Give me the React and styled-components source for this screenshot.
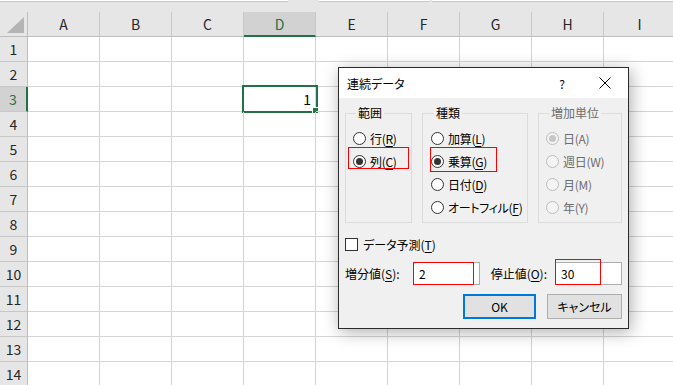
import React from 'react'
import styled, { createGlobalStyle, css } from 'styled-components'

const GlobalStyle = createGlobalStyle`
  body {
    margin: 0;
    background: #ffffff;
    font-family: "Noto Sans CJK JP", "Noto Sans", sans-serif;
  }
`

const COLUMNS = ['A', 'B', 'C', 'D', 'E', 'F', 'G', 'H', 'I']
const ROWS = Array.from({ length: 14 }, (_, i) => i + 1)

const Page = styled.div`
  position: relative;
  width: 673px;
  height: 385px;
  overflow: hidden;
  background: #ffffff;
`

const TopStrip = styled.div`
  display: flex;
  height: 12px;
  background: #e6e6e6;
`

const FormulaBox = styled.div`
  width: ${props => props.$width}px;
  margin-left: ${props => props.$offset || 0}px;
  height: 1px;
  background: #ffffff;
  border-bottom: 1px solid #c6c6c6;
`

const Sheet = styled.div`
  display: grid;
  grid-template-columns: 28px repeat(9, 72px);
  grid-template-rows: 25px;
  grid-auto-rows: 25px;
  font-family: "Noto Sans CJK JP", sans-serif;
`

const Corner = styled.div`
  box-sizing: border-box;
  background: #e6e6e6;
  border-right: 1px solid #bdbdbd;
  border-bottom: 1px solid #bdbdbd;
  display: flex;
  align-items: flex-end;
  justify-content: flex-end;
  padding: 0 3px 3px 0;

  &::before {
    content: '';
    width: 0;
    height: 0;
    border-left: 17px solid transparent;
    border-bottom: 16px solid #b4b4b4;
  }
`

const ColHead = styled.div`
  box-sizing: border-box;
  display: flex;
  align-items: center;
  justify-content: center;
  font-size: 14px;
  color: ${props => (props.$active ? '#217346' : '#262626')};
  background: ${props => (props.$active ? '#d2d2d2' : '#e6e6e6')};
  border-right: 1px solid #c8c8c8;
  border-bottom: ${props => (props.$active ? '2px solid #217346' : '1px solid #bdbdbd')};
`

const RowHead = styled.div`
  box-sizing: border-box;
  display: flex;
  align-items: center;
  justify-content: center;
  font-size: 14px;
  color: ${props => (props.$active ? '#217346' : '#262626')};
  background: ${props => (props.$active ? '#d2d2d2' : '#e6e6e6')};
  border-bottom: 1px solid #c8c8c8;
  border-right: ${props => (props.$active ? '2px solid #217346' : '1px solid #bdbdbd')};
`

const Cell = styled.div`
  position: relative;
  box-sizing: border-box;
  display: flex;
  align-items: center;
  justify-content: flex-end;
  padding-right: 4px;
  font-size: 14px;
  color: #000000;
  border-right: 1px solid #d4d4d4;
  border-bottom: 1px solid #d4d4d4;

  ${props =>
    props.$selected &&
    css`
      &::before {
        content: '';
        position: absolute;
        top: -2px;
        left: -2px;
        right: -3px;
        bottom: -2px;
        border: 2px solid #217346;
      }
      &::after {
        content: '';
        position: absolute;
        right: -4px;
        bottom: -3px;
        width: 5px;
        height: 5px;
        background: #217346;
        border: 1px solid #ffffff;
      }
    `}
`

const Dialog = styled.div`
  position: absolute;
  left: 338px;
  top: 67px;
  width: 291px;
  height: 262px;
  box-sizing: border-box;
  display: flex;
  flex-direction: column;
  background: #f0f0f0;
  border: 1px solid #2b2b2b;
  box-shadow: 2px 3px 16px rgba(0, 0, 0, 0.32);
  font-family: "Noto Sans CJK JP", sans-serif;
  font-size: 12px;
  font-feature-settings: "palt";
  color: #000000;
`

const TitleBar = styled.div`
  display: flex;
  align-items: center;
  height: 30px;
  padding: 0 0 0 8px;
  background: #ffffff;
`

const Title = styled.div`
  flex: 1;
  font-size: 12px;
`

const TitleButton = styled.div`
  display: flex;
  align-items: center;
  justify-content: center;
  width: ${props => props.$width}px;
  height: 30px;
  font-size: 12px;
`

const Body = styled.div`
  display: flex;
  flex-direction: column;
  padding: 7px 6px 0 6px;
`

const Groups = styled.div`
  display: flex;
  gap: 10px;
`

const Group = styled.fieldset`
  box-sizing: border-box;
  width: ${props => props.$width}px;
  height: 118px;
  min-width: 0;
  margin: 0;
  padding: 0 0 0 ${props => props.$pad}px;
  border: 1px solid #dcdcdc;

  legend {
    margin-left: 3px;
    padding: 0 2px;
    line-height: 16px;
    font-size: 12px;
    color: ${props => (props.$disabled ? '#6d6d6d' : '#000000')};
  }
`

const OptionList = styled.div`
  display: flex;
  flex-direction: column;
  margin-top: 6px;
`

const Option = styled.div`
  position: relative;
  display: flex;
  align-items: center;
  gap: 4px;
  height: 23px;
  white-space: nowrap;
  letter-spacing: -0.3px;
  color: ${props => (props.$disabled ? '#6d6d6d' : '#000000')};
`

const Radio = styled.span`
  box-sizing: border-box;
  width: 13px;
  height: 13px;
  flex: none;
  border-radius: 50%;
  border: 1px solid ${props => (props.$disabled ? '#bcbcbc' : '#333333')};
  background: ${props => (props.$disabled ? '#f4f4f4' : '#ffffff')};
  display: flex;
  align-items: center;
  justify-content: center;

  &::after {
    content: '';
    display: ${props => (props.$checked ? 'block' : 'none')};
    width: 7px;
    height: 7px;
    border-radius: 50%;
    background: ${props => (props.$disabled ? '#c6c6c6' : '#333333')};
  }
`

const Key = styled.span`
  text-decoration: ${props => (props.$plain ? 'none' : 'underline')};
  text-underline-offset: 2px;
`

const Mark = styled.span`
  position: absolute;
  z-index: 2;
  left: ${props => props.$left}px;
  top: ${props => props.$top}px;
  width: ${props => props.$w}px;
  height: ${props => props.$h}px;
  box-sizing: border-box;
  border: 1px solid #ff0000;
  background: transparent;
  pointer-events: none;
`

const CheckRow = styled.div`
  display: flex;
  align-items: center;
  gap: 5px;
  height: 18px;
  margin-top: 12px;
`

const CheckBox = styled.span`
  box-sizing: border-box;
  width: 13px;
  height: 13px;
  border: 1px solid #333333;
  background: #ffffff;
`

const FieldRow = styled.div`
  display: flex;
  align-items: center;
  height: 23px;
  margin-top: 9px;
`

const FieldLabel = styled.span`
  width: ${props => (props.$width ? `${props.$width}px` : 'auto')};
  margin-left: ${props => (props.$push ? 'auto' : '0')};
  margin-right: ${props => props.$gap || 0}px;
  white-space: nowrap;
`

const Field = styled.div`
  position: relative;
  box-sizing: border-box;
  width: 67px;
  height: 23px;
  display: flex;
  align-items: center;
  padding-left: 5px;
  background: #ffffff;
  border: 1px solid #adadad;
  font-size: 12px;
`

const Buttons = styled.div`
  display: flex;
  justify-content: flex-end;
  gap: 11px;
  margin-top: 9px;
`

const Button = styled.div`
  box-sizing: border-box;
  width: ${props => props.$width}px;
  height: 25px;
  display: flex;
  align-items: center;
  justify-content: center;
  background: #e1e1e1;
  border: ${props => (props.$primary ? '2px solid #0078d7' : '1px solid #adadad')};
`

const CloseIcon = () => (
  <svg width="12" height="12" viewBox="0 0 12 12">
    <path d="M0.5 0.5 L11.5 11.5 M11.5 0.5 L0.5 11.5" stroke="#000" strokeWidth="1" />
  </svg>
)

const RadioOption = ({ label, k, checked, disabled, mark }) => (
  <Option $disabled={disabled}>
    <Radio $checked={checked} $disabled={disabled} />
    <span>
      {label}(<Key $plain={disabled}>{k}</Key>)
    </span>
    {mark && <Mark $left={mark[0]} $top={mark[1]} $w={mark[2]} $h={mark[3]} />}
  </Option>
)

export default function App() {
  return (
    <Page>
      <GlobalStyle />
      <TopStrip>
        <FormulaBox $width={288} />
        <FormulaBox $width={110} $offset={31} />
        <FormulaBox $width={241} $offset={3} />
      </TopStrip>
      <Sheet>
        <Corner />
        {COLUMNS.map(c => (
          <ColHead key={c} $active={c === 'D'}>{c}</ColHead>
        ))}
        {ROWS.map(r => (
          <React.Fragment key={r}>
            <RowHead $active={r === 3}>{r}</RowHead>
            {COLUMNS.map(c => (
              <Cell key={c} $selected={r === 3 && c === 'D'}>
                {r === 3 && c === 'D' ? '1' : ''}
              </Cell>
            ))}
          </React.Fragment>
        ))}
      </Sheet>

      <Dialog>
        <TitleBar>
          <Title>連続データ</Title>
          <TitleButton $width={40}>?</TitleButton>
          <TitleButton $width={46}><CloseIcon /></TitleButton>
        </TitleBar>
        <Body>
          <Groups>
            <Group $width={67} $pad={7}>
              <legend>範囲</legend>
              <OptionList>
                <RadioOption label="行" k="R" />
                <RadioOption label="列" k="C" checked mark={[-5, -3, 61, 22]} />
              </OptionList>
            </Group>
            <Group $width={106} $pad={8}>
              <legend>種類</legend>
              <OptionList>
                <RadioOption label="加算" k="L" />
                <RadioOption label="乗算" k="G" checked mark={[-1, -3, 67, 25]} />
                <RadioOption label="日付" k="D" />
                <RadioOption label="オートフィル" k="F" />
              </OptionList>
            </Group>
            <Group $width={84} $pad={7} $disabled>
              <legend>増加単位</legend>
              <OptionList>
                <RadioOption label="日" k="A" checked disabled />
                <RadioOption label="週日" k="W" disabled />
                <RadioOption label="月" k="M" disabled />
                <RadioOption label="年" k="Y" disabled />
              </OptionList>
            </Group>
          </Groups>

          <CheckRow>
            <CheckBox />
            <span>データ予測(<Key>T</Key>)</span>
          </CheckRow>

          <FieldRow>
            <FieldLabel $width={68}>増分値(<Key>S</Key>):</FieldLabel>
            <Field>
              2
              <Mark $left={-1} $top={-1} $w={61} $h={23} />
            </Field>
            <FieldLabel $push $gap={8}>停止値(<Key>O</Key>):</FieldLabel>
            <Field>
              30
              <Mark $left={-1} $top={-4} $w={46} $h={26} />
            </Field>
          </FieldRow>

          <Buttons>
            <Button $primary $width={73}>OK</Button>
            <Button $width={75}>キャンセル</Button>
          </Buttons>
        </Body>
      </Dialog>
    </Page>
  )
}
